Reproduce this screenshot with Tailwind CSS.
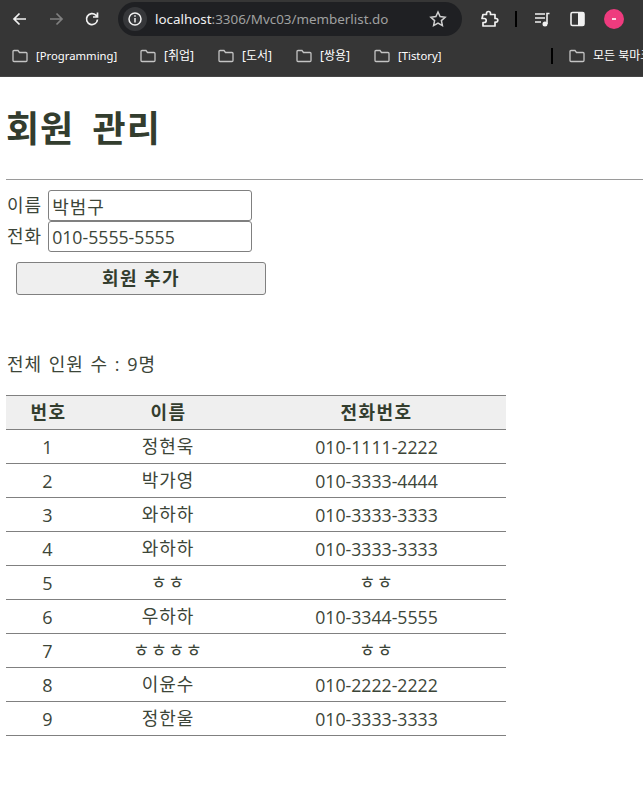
<!DOCTYPE html>
<html lang="ko">
  <head>
    <meta charset="UTF-8" />
    <meta name="viewport" content="width=device-width, initial-scale=1.0" />
    <title>회원 관리</title>
    <script src="https://cdn.jsdelivr.net/npm/@tailwindcss/browser@4"></script>
  </head>
  <body class="w-full h-[808px] overflow-hidden bg-white text-[#3c4538] font-['Open_Sans','Noto_Sans_CJK_KR',sans-serif]">
    <!-- browser toolbar -->
    <div class="h-[38px] bg-[#363636] flex items-center text-white">
      <div class="w-[118px] shrink-0 flex items-center pl-[11px] gap-[18px]">
        <svg class="w-[18px] h-[18px]" viewBox="0 0 18 18" fill="none" stroke="#f1f1f1" stroke-width="1.700"><path d="M15 9H3.500M8.500 3.500 3 9l5.500 5.500" /></svg>
        <svg class="w-[18px] h-[18px]" viewBox="0 0 18 18" fill="none" stroke="#808080" stroke-width="1.700"><path d="M3 9h11.500M9.500 3.500 15 9l-5.500 5.500" /></svg>
        <svg class="w-[18px] h-[18px]" viewBox="0 0 18 18" fill="none" stroke="#f1f1f1" stroke-width="1.700"><path d="M14.500 9.500a5.500 5.500 0 1 1-1.600-4.300L14.500 7M14.500 2.500V7H10" /></svg>
      </div>
      <div class="w-[344px] shrink-0 h-[34px] rounded-full bg-[#1f2023] flex items-center pl-[5px]">
        <div class="w-[24px] h-[24px] rounded-full bg-[#36373a] flex items-center justify-center">
          <svg class="w-[16px] h-[16px]" viewBox="0 0 16 16" fill="none" stroke="#f1f1f1" stroke-width="1.500"><circle cx="8" cy="8" r="6" /><path d="M8 7v4.500M8 4.300v1.400" /></svg>
        </div>
        <span class="ml-[8px] text-[13.4px] font-['Noto_Sans',sans-serif] text-[#f1f1f1]">localhost<span class="text-[#a0a0a0]">:3306/Mvc03/memberlist.do</span></span>
        <svg class="ml-auto mr-[15px] w-[18px] h-[18px]" viewBox="0 0 18 18" fill="none" stroke="#d0d0d0" stroke-width="1.500"><path d="m9 2 2.100 4.600 5 .6-3.700 3.400 1 5L9 13.100l-4.400 2.500 1-5L1.900 7.200l5-.6z" /></svg>
      </div>
      <div class="flex items-center ml-[17px]">
        <svg class="w-[20px] h-[20px]" viewBox="0 0 20 20" fill="none" stroke="#f1f1f1" stroke-width="1.700" stroke-linejoin="round"><path d="M4 5.500h3.500V4.500a2 2 0 0 1 4 0v1H16v4h1a1.800 1.800 0 0 1 0 3.600h-1V17H4v-3.500h1.200a2 2 0 0 0 0-4H3z" /></svg>
        <div class="ml-[16px] w-[2px] h-[16px] bg-black"></div>
        <svg class="ml-[17px] w-[18px] h-[18px]" viewBox="0 0 18 18" fill="none" stroke="#f1f1f1" stroke-width="1.600"><path d="M1 4h10M1 8h10M1 12h6M15.500 3.500H13V14" /><circle cx="11" cy="14" r="1.700" fill="#f1f1f1" /></svg>
        <svg class="ml-[17px] w-[18px] h-[18px]" viewBox="0 0 18 18"><rect x="2" y="2.500" width="13" height="13" rx="1.500" fill="none" stroke="#f1f1f1" stroke-width="1.600" /><rect x="9" y="2.500" width="6" height="13" fill="#f1f1f1" /></svg>
        <div class="ml-[17px] w-[20px] h-[20px] rounded-full bg-[#ee3b7e] flex items-center justify-center">
          <div class="w-[4px] h-[2px] bg-white/80"></div>
        </div>
      </div>
    </div>
    <!-- bookmark bar -->
    <div class="h-[39px] bg-[#363636] border-b border-[#454545] flex items-center pl-[12px] pb-[2px] text-[12px] text-white font-['Noto_Sans','Noto_Sans_CJK_KR',sans-serif] whitespace-nowrap overflow-hidden">
      <div class="w-[128px] shrink-0 flex items-center gap-[8px]">
        <svg class="w-[16px] h-[14px]" viewBox="0 0 16 14" fill="none" stroke="#c4c4c4" stroke-width="1.300"><path d="M1 2.500a1 1 0 0 1 1-1h4l1.500 2H14a1 1 0 0 1 1 1v7a1 1 0 0 1-1 1H2a1 1 0 0 1-1-1z" /></svg>
        <span class="text-[11.3px]">[Programming]</span>
      </div>
      <div class="w-[78px] shrink-0 flex items-center gap-[8px]">
        <svg class="w-[16px] h-[14px]" viewBox="0 0 16 14" fill="none" stroke="#c4c4c4" stroke-width="1.300"><path d="M1 2.500a1 1 0 0 1 1-1h4l1.500 2H14a1 1 0 0 1 1 1v7a1 1 0 0 1-1 1H2a1 1 0 0 1-1-1z" /></svg>
        <span>[취업]</span>
      </div>
      <div class="w-[78px] shrink-0 flex items-center gap-[8px]">
        <svg class="w-[16px] h-[14px]" viewBox="0 0 16 14" fill="none" stroke="#c4c4c4" stroke-width="1.300"><path d="M1 2.500a1 1 0 0 1 1-1h4l1.500 2H14a1 1 0 0 1 1 1v7a1 1 0 0 1-1 1H2a1 1 0 0 1-1-1z" /></svg>
        <span>[도서]</span>
      </div>
      <div class="w-[78px] shrink-0 flex items-center gap-[8px]">
        <svg class="w-[16px] h-[14px]" viewBox="0 0 16 14" fill="none" stroke="#c4c4c4" stroke-width="1.300"><path d="M1 2.500a1 1 0 0 1 1-1h4l1.500 2H14a1 1 0 0 1 1 1v7a1 1 0 0 1-1 1H2a1 1 0 0 1-1-1z" /></svg>
        <span>[쌍용]</span>
      </div>
      <div class="w-[177px] shrink-0 flex items-center gap-[8px]">
        <svg class="w-[16px] h-[14px]" viewBox="0 0 16 14" fill="none" stroke="#c4c4c4" stroke-width="1.300"><path d="M1 2.500a1 1 0 0 1 1-1h4l1.500 2H14a1 1 0 0 1 1 1v7a1 1 0 0 1-1 1H2a1 1 0 0 1-1-1z" /></svg>
        <span class="text-[11.3px]">[Tistory]</span>
      </div>
      <div class="w-[2px] h-[16px] shrink-0 bg-black mr-[16px]"></div>
      <div class="flex shrink-0 items-center gap-[8px]">
        <svg class="w-[16px] h-[14px]" viewBox="0 0 16 14" fill="none" stroke="#c4c4c4" stroke-width="1.300"><path d="M1 2.500a1 1 0 0 1 1-1h4l1.500 2H14a1 1 0 0 1 1 1v7a1 1 0 0 1-1 1H2a1 1 0 0 1-1-1z" /></svg>
        <span>모든 북마크</span>
      </div>
    </div>

    <div class="px-[6px]">
      <h1 class="pt-[27px] h-[102px] text-[36px] leading-[50px] font-bold tracking-[1px] [word-spacing:8px] text-[#333d2e]">회원 관리</h1>
      <hr class="border-t border-[#9a9a9a] -mr-[6px]" />
      <form class="mt-[10px] text-[18px]">
        <div class="h-[31px] flex items-center gap-[6px]">
          <label class="pl-[1px] tracking-[1px]">이름</label>
          <input class="w-[204px] h-[31px] border border-[#808080] rounded-[3px] px-[3px] text-[18px] tracking-[1px] outline-none" value="박범구" />
        </div>
        <div class="h-[31px] flex items-center gap-[6px]">
          <label class="pl-[1px] tracking-[1px]">전화</label>
          <input class="w-[204px] h-[31px] border border-[#808080] rounded-[3px] px-[3px] text-[17.7px] outline-none" value="010-5555-5555" />
        </div>
        <button type="button" class="block ml-[10px] mt-[10px] w-[250px] h-[33px] bg-[#efefef] border border-[#808080] rounded-[3px] text-[18px] font-bold tracking-[1.400px] text-[#333d2e]">회원 추가</button>
      </form>
      <p class="mt-[55px] pl-[1px] text-[18px] leading-[28px] tracking-[1px] [word-spacing:1px]">전체 인원 수 : 9명</p>
      <table class="mt-[17px] w-[500px] table-fixed text-[18px] text-center border-collapse">
        <thead>
          <tr class="h-[34px] bg-[#efefef] border-y border-[#808080] tracking-[1.400px] text-[#333d2e]">
            <th class="w-[83px] pl-[2px]">번호</th>
            <th class="w-[158px] pl-[1px]">이름</th>
            <th>전화번호</th>
          </tr>
        </thead>
        <tbody>
          <tr class="h-[34px] border-b border-[#808080]"><td class="pt-[2px]">1</td><td class="tracking-[1px]">정현욱</td><td class="pt-[2px] text-[17.7px]">010-1111-2222</td></tr>
          <tr class="h-[34px] border-b border-[#808080]"><td class="pt-[2px]">2</td><td class="tracking-[1px]">박가영</td><td class="pt-[2px] text-[17.7px]">010-3333-4444</td></tr>
          <tr class="h-[34px] border-b border-[#808080]"><td class="pt-[2px]">3</td><td class="tracking-[1px]">와하하</td><td class="pt-[2px] text-[17.7px]">010-3333-3333</td></tr>
          <tr class="h-[34px] border-b border-[#808080]"><td class="pt-[2px]">4</td><td class="tracking-[1px]">와하하</td><td class="pt-[2px] text-[17.7px]">010-3333-3333</td></tr>
          <tr class="h-[34px] border-b border-[#808080]"><td class="pt-[2px]">5</td><td class="tracking-[1px]">ㅎㅎ</td><td class="tracking-[1px]">ㅎㅎ</td></tr>
          <tr class="h-[34px] border-b border-[#808080]"><td class="pt-[2px]">6</td><td class="tracking-[1px]">우하하</td><td class="pt-[2px] text-[17.7px]">010-3344-5555</td></tr>
          <tr class="h-[34px] border-b border-[#808080]"><td class="pt-[2px]">7</td><td class="tracking-[1px]">ㅎㅎㅎㅎ</td><td class="tracking-[1px]">ㅎㅎ</td></tr>
          <tr class="h-[34px] border-b border-[#808080]"><td class="pt-[2px]">8</td><td class="tracking-[1px]">이윤수</td><td class="pt-[2px] text-[17.7px]">010-2222-2222</td></tr>
          <tr class="h-[34px] border-b border-[#808080]"><td class="pt-[2px]">9</td><td class="tracking-[1px]">정한울</td><td class="pt-[2px] text-[17.7px]">010-3333-3333</td></tr>
        </tbody>
      </table>
    </div>
  </body>
</html>
